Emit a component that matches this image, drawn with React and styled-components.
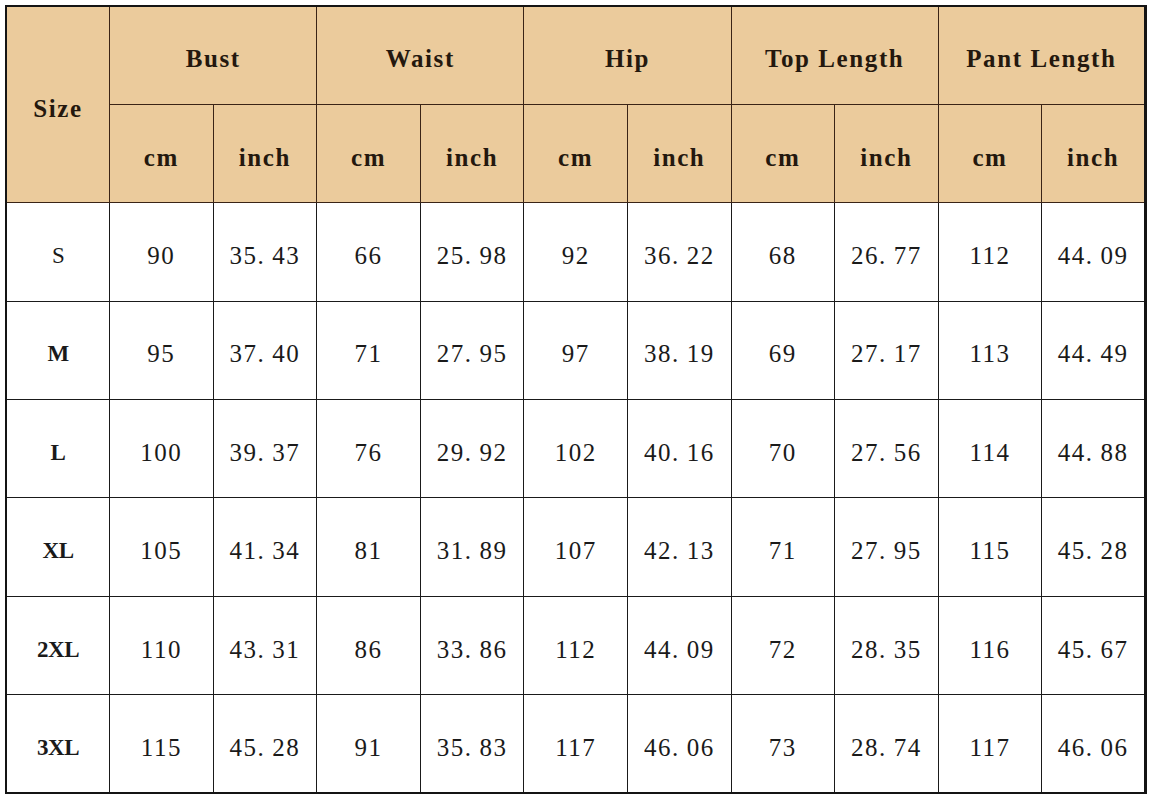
import React from 'react';
import styled, { createGlobalStyle } from 'styled-components';

const GlobalStyle = createGlobalStyle`
  html, body {
    margin: 0;
    padding: 0;
    background: #ffffff;
  }
`;

const Page = styled.div`
  padding: 5px 0 0 5px;
`;

const Table = styled.table`
  width: 1142px;
  height: 788px;
  table-layout: fixed;
  border-collapse: collapse;
  border: 2px solid #141414;
  border-right-width: 3px;
`;

const HeadCell = styled.th`
  background: #ebcb9c;
  border: 1px solid #3a2416;
  color: #24180e;
  font-family: "Liberation Serif", "Times New Roman", serif;
  font-weight: 700;
  font-size: 25px;
  letter-spacing: 1.6px;
  text-align: center;
  vertical-align: middle;
  padding: 8px 0 0;
  white-space: nowrap;
`;

const Row = styled.tr`
  height: 98.4px;
`;

const Cell = styled.td`
  border: 1px solid #1a1a1a;
  background: #ffffff;
  color: #1a1a1a;
  font-family: "Liberation Serif", "Times New Roman", serif;
  font-size: 25px;
  letter-spacing: 1.5px;
  text-align: center;
  vertical-align: middle;
  padding: 8px 0 0;
  white-space: nowrap;
`;

const SizeCell = styled(Cell)`
  font-weight: ${(p) => (p.$light ? 400 : 700)};
  font-size: 23px;
  letter-spacing: -0.5px;
`;

const Dot = styled.span`
  margin-right: 7px;
`;

const groups = ['Bust', 'Waist', 'Hip', 'Top Length', 'Pant Length'];

const rows = [
  ['S', '90', '35.43', '66', '25.98', '92', '36.22', '68', '26.77', '112', '44.09'],
  ['M', '95', '37.40', '71', '27.95', '97', '38.19', '69', '27.17', '113', '44.49'],
  ['L', '100', '39.37', '76', '29.92', '102', '40.16', '70', '27.56', '114', '44.88'],
  ['XL', '105', '41.34', '81', '31.89', '107', '42.13', '71', '27.95', '115', '45.28'],
  ['2XL', '110', '43.31', '86', '33.86', '112', '44.09', '72', '28.35', '116', '45.67'],
  ['3XL', '115', '45.28', '91', '35.83', '117', '46.06', '73', '28.74', '117', '46.06'],
];

// the decimal point in the source sheet sits in a wide full-width slot
const Num = ({ value }) => {
  const [whole, frac] = value.split('.');
  if (frac === undefined) return value;
  return (
    <>
      {whole}
      <Dot>.</Dot>
      {frac}
    </>
  );
};

const App = () => (
  <Page>
    <GlobalStyle />
    <Table>
      <thead>
        <Row>
          <HeadCell rowSpan={2}>Size</HeadCell>
          {groups.map((g) => (
            <HeadCell key={g} colSpan={2}>{g}</HeadCell>
          ))}
        </Row>
        <Row>
          {groups.map((g) => (
            <React.Fragment key={g}>
              <HeadCell>cm</HeadCell>
              <HeadCell>inch</HeadCell>
            </React.Fragment>
          ))}
        </Row>
      </thead>
      <tbody>
        {rows.map(([size, ...vals]) => (
          <Row key={size}>
            <SizeCell $light={size === 'S'}>{size}</SizeCell>
            {vals.map((v, i) => (
              <Cell key={i}><Num value={v} /></Cell>
            ))}
          </Row>
        ))}
      </tbody>
    </Table>
  </Page>
);

export default App;
